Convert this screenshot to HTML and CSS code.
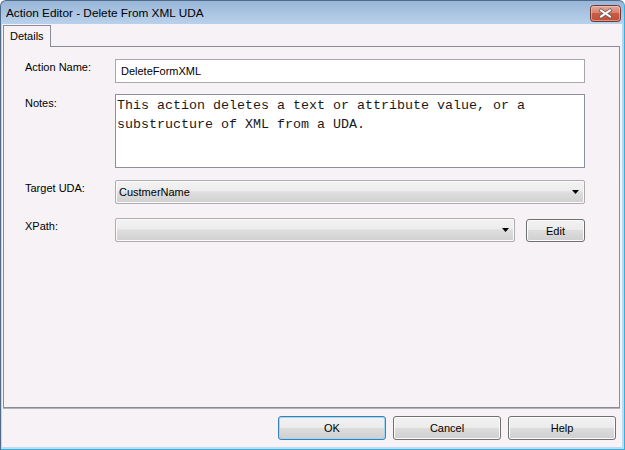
FILE: index.html
```html
<!DOCTYPE html>
<html>
<head>
<meta charset="utf-8">
<link rel="stylesheet" href="styles.css">
</head>
<body>
<div class="window">
  <div class="titlebar">
    <span class="title">Action Editor - Delete From XML UDA</span>
    <span class="close">
      <svg width="31" height="17" viewBox="0 0 31 17">
        <defs>
          <linearGradient id="cg" x1="0" y1="0" x2="0" y2="1">
            <stop offset="0" stop-color="#eaa99a"/>
            <stop offset="0.45" stop-color="#d8826f"/>
            <stop offset="0.5" stop-color="#c95c45"/>
            <stop offset="1" stop-color="#c44c33"/>
          </linearGradient>
        </defs>
        <rect x="0.5" y="0.5" width="30" height="16" rx="3" fill="url(#cg)" stroke="#6a3a37"/>
        <rect x="1.5" y="1.5" width="28" height="14" rx="2" fill="none" stroke="#f5cfc6" stroke-opacity="0.55"/>
        <path d="M11 5.5 L20 11.5 M20 5.5 L11 11.5" stroke="#6b5f5e" stroke-width="3.6" stroke-linecap="square"/>
        <path d="M11 5.5 L20 11.5 M20 5.5 L11 11.5" stroke="#ffffff" stroke-width="2" stroke-linecap="square"/>
      </svg>
    </span>
  </div>
  <div class="client">
    <div class="tabs"><div class="tab">Details</div></div>
    <div class="panel">
      <div class="row">
        <div class="lbl">Action Name:</div>
        <div class="input">DeleteFormXML</div>
      </div>
      <div class="row r2">
        <div class="lbl lbl-notes">Notes:</div>
        <div class="notes">This action deletes a text or attribute value, or a<br>substructure of XML from a UDA.</div>
      </div>
      <div class="row r3">
        <div class="lbl">Target UDA:</div>
        <div class="combo wide"><span>CustmerName</span><svg class="arrow" width="7" height="4" viewBox="0 0 7 4"><path d="M0 0H7L3.5 4Z" fill="#000"/></svg></div>
      </div>
      <div class="row r4">
        <div class="lbl">XPath:</div>
        <div class="combo narrow"><span></span><svg class="arrow" width="7" height="4" viewBox="0 0 7 4"><path d="M0 0H7L3.5 4Z" fill="#000"/></svg></div>
        <div class="btn edit">Edit</div>
      </div>
    </div>
    <div class="buttons">
      <div class="btn default">OK</div>
      <div class="btn">Cancel</div>
      <div class="btn">Help</div>
    </div>
  </div>
</div>
</body>
</html>
```
FILE: styles.css
```css
html, body {
  margin: 0;
  padding: 0;
}
body {
  width: 625px;
  height: 450px;
  overflow: hidden;
  font-family: "Liberation Sans", Arial, sans-serif;
  font-size: 11px;
  color: #000;
  background: #ffffff;
}
.window {
  box-sizing: border-box;
  width: 625px;
  height: 450px;
  border: 1px solid #4f6b8c;
  border-right-color: #2bb3e4;
  border-bottom-color: #2bb3e4;
  border-radius: 6px 6px 0 0;
  background: linear-gradient(#9ab6d7 0px, #bad2ec 24px, #c3d9f0 100%);
  display: flex;
  flex-direction: column;
}
.titlebar {
  height: 23px;
  flex: none;
  display: flex;
  justify-content: space-between;
  align-items: flex-start;
  padding: 0 3px 0 5px;
}
.title {
  font-size: 11.8px;
  line-height: 15px;
  padding-top: 5px;
  color: #000;
}
.close {
  margin-top: 4px;
  height: 17px;
  display: block;
}
.close svg {
  display: block;
}
.client {
  flex: 1;
  margin: 0 2px 2px 1px;
  background: #f6f2f5;
  display: flex;
  flex-direction: column;
}
.tabs {
  display: flex;
  padding: 1px 0 0 1px;
}
.tab {
  position: relative;
  z-index: 1;
  height: 21px;
  line-height: 20px;
  padding: 0 6px;
  border: 1px solid #898c95;
  border-bottom: none;
  background: #f6f2f5;
  margin-bottom: -1px;
}
.panel {
  box-sizing: border-box;
  height: 362px;
  margin: 0 2px 0 1px;
  border: 1px solid #898c95;
  box-shadow: 0 1px 0 #b4b4b8;
  padding: 12px 34px 0 21px;
}
.row {
  display: flex;
  align-items: flex-start;
}
.r2 { margin-top: 11px; }
.r3 { margin-top: 12px; }
.r4 { margin-top: 14px; }
.lbl {
  width: 90px;
  flex: none;
  line-height: 13px;
  padding-top: 2px;
}
.lbl-notes {
  padding-top: 3px;
}
.input {
  box-sizing: border-box;
  width: 470px;
  height: 24px;
  border: 1px solid #a7a7a9;
  background: #fff;
  padding-left: 5px;
  line-height: 22px;
}
.notes {
  box-sizing: border-box;
  width: 470px;
  height: 74px;
  border: 1px solid #8c8fa1;
  background: #fff;
  padding: 2px 1px;
  font-family: "Liberation Mono", "Courier New", monospace;
  font-size: 13.33px;
  line-height: 18.5px;
  color: #1a1a1a;
  white-space: nowrap;
}
.combo {
  box-sizing: border-box;
  height: 24px;
  border: 1px solid #acacac;
  border-radius: 2px;
  background: linear-gradient(#f3f3f3 0%, #ececec 45%, #dedede 50%, #d0d0d0 100%);
  box-shadow: inset 0 0 0 1px #fbfbfb;
  display: flex;
  align-items: center;
  justify-content: space-between;
  padding: 0 5px 0 3px;
}
.combo.wide { width: 470px; }
.combo.narrow { width: 400px; }
.arrow {
  display: block;
}
.btn {
  box-sizing: border-box;
  height: 24px;
  width: 108px;
  border: 1px solid #707070;
  border-radius: 3px;
  background: linear-gradient(#f2f2f2 0%, #ebebeb 50%, #dddddd 50%, #cfcfcf 100%);
  box-shadow: inset 0 0 0 1px #fcfcfc;
  display: flex;
  align-items: center;
  justify-content: center;
}
.btn.edit {
  width: 59px;
  height: 23px;
  margin-left: 11px;
  margin-top: 1px;
}
.btn.default {
  border-color: #3c7fb1;
  box-shadow: inset 0 0 0 1px #9fd8f6;
}
.buttons {
  display: flex;
  justify-content: flex-end;
  gap: 7px;
  padding: 8px 6px 0 0;
}
```
